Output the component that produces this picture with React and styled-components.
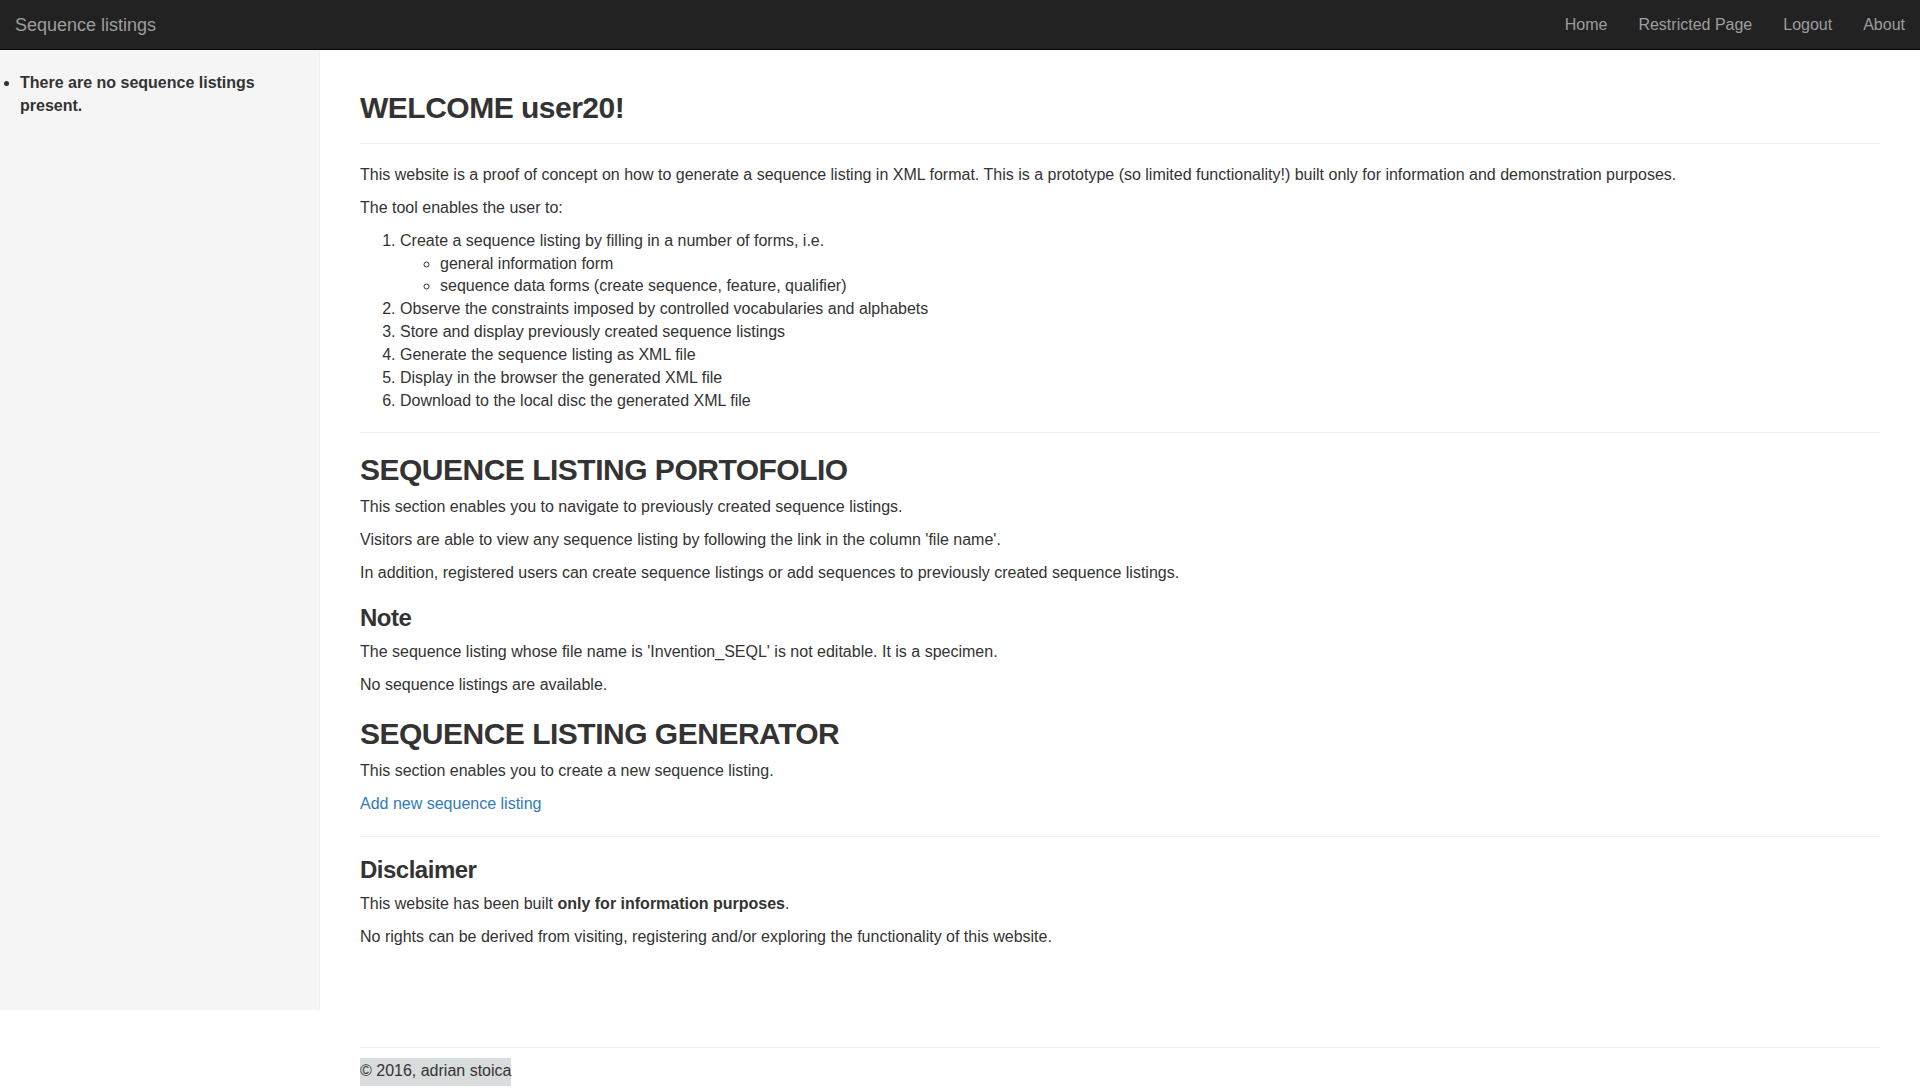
import React from 'react';
import styled, { createGlobalStyle } from 'styled-components';

const GlobalStyle = createGlobalStyle`
  * { box-sizing: border-box; }
  html, body { margin: 0; padding: 0; background: #fff; }
  body {
    font-family: "Liberation Sans", Helvetica, Arial, sans-serif;
    font-size: 16px;
    line-height: 1.42857143;
    color: #333;
  }
`;

const Navbar = styled.nav`
  display: flex;
  align-items: center;
  justify-content: space-between;
  height: 50px;
  padding-left: 15px;
  background: #222;
  border-bottom: 1px solid #080808;
`;

const Brand = styled.a`
  font-size: 18px;
  line-height: 20px;
  color: #9d9d9d;
  text-decoration: none;
`;

const NavList = styled.ul`
  display: flex;
  margin: 0;
  padding: 0;
  list-style: none;
`;

const NavLink = styled.a`
  display: block;
  padding: 15px 15px 15px 16px;
  font-size: 16px;
  line-height: 20px;
  color: #9d9d9d;
  text-decoration: none;
`;

const Row = styled.div`
  display: flex;
  align-items: stretch;
`;

const Sidebar = styled.aside`
  flex: 0 0 320px;
  width: 320px;
  padding: 22px 20px 20px 0;
  background: #f5f5f5;
  border-right: 1px solid #eee;
`;

const SideList = styled.ul`
  margin: 0;
  padding-left: 20px;
  font-weight: bold;
`;

const Main = styled.main`
  flex: 1;
  min-width: 0;
  padding: 0 40px 51px;
`;

const PageHeader = styled.div`
  margin: 41px 0 20px;
  padding-bottom: 9px;
  border-bottom: 1px solid #eee;
`;

const H1 = styled.h1`
  margin: 0 0 10px;
  font-size: 30px;
  font-weight: bold;
  letter-spacing: -0.5px;
  line-height: 1.1;
`;

const H2 = styled.h2`
  margin: 20px 0 10px;
  font-size: 30px;
  font-weight: bold;
  letter-spacing: -0.5px;
  line-height: 1.1;
`;

const H3 = styled.h3`
  margin: 20px 0 10px;
  font-size: 24px;
  font-weight: bold;
  letter-spacing: -0.5px;
  line-height: 1.1;
`;

const P = styled.p`
  margin: 0 0 10px;
`;

const OList = styled.ol`
  margin: 0 0 10px;
  padding-left: 40px;
`;

const SubList = styled.ul`
  margin: 0;
  padding-left: 40px;
  list-style-type: circle;
`;

const Rule = styled.hr`
  margin: ${p => p.$top || 20}px 0 ${p => p.$bottom || 20}px;
  border: 0;
  border-top: 1px solid #eee;
`;

const Link = styled.a`
  color: #337ab7;
  text-decoration: none;
`;

const Footer = styled.footer`
  margin-left: 320px;
  padding: 0 40px;
`;

const Copyright = styled.span`
  display: inline-block;
  height: 28px;
  line-height: 26px;
  background: #d9dcdd;
`;

export default function App() {
  return (
    <>
      <GlobalStyle />
      <Navbar>
        <Brand href="#">Sequence listings</Brand>
        <NavList>
          <li><NavLink href="#">Home</NavLink></li>
          <li><NavLink href="#">Restricted Page</NavLink></li>
          <li><NavLink href="#">Logout</NavLink></li>
          <li><NavLink href="#">About</NavLink></li>
        </NavList>
      </Navbar>
      <Row>
        <Sidebar>
          <SideList>
            <li>There are no sequence listings present.</li>
          </SideList>
        </Sidebar>
        <Main>
          <PageHeader>
            <H1>WELCOME user20!</H1>
          </PageHeader>
          <P>
            This website is a proof of concept on how to generate a sequence listing in XML format. This is a prototype (so limited functionality!) built only for information and demonstration purposes.
          </P>
          <P>The tool enables the user to:</P>
          <OList>
            <li>
              Create a sequence listing by filling in a number of forms, i.e.
              <SubList>
                <li>general information form</li>
                <li>sequence data forms (create sequence, feature, qualifier)</li>
              </SubList>
            </li>
            <li>Observe the constraints imposed by controlled vocabularies and alphabets</li>
            <li>Store and display previously created sequence listings</li>
            <li>Generate the sequence listing as XML file</li>
            <li>Display in the browser the generated XML file</li>
            <li>Download to the local disc the generated XML file</li>
          </OList>
          <Rule />
          <H2>SEQUENCE LISTING PORTOFOLIO</H2>
          <P>This section enables you to navigate to previously created sequence listings.</P>
          <P>Visitors are able to view any sequence listing by following the link in the column 'file name'.</P>
          <P>In addition, registered users can create sequence listings or add sequences to previously created sequence listings.</P>
          <H3>Note</H3>
          <P>The sequence listing whose file name is 'Invention_SEQL' is not editable. It is a specimen.</P>
          <P>No sequence listings are available.</P>
          <H2>SEQUENCE LISTING GENERATOR</H2>
          <P>This section enables you to create a new sequence listing.</P>
          <P><Link href="#">Add new sequence listing</Link></P>
          <Rule />
          <H3>Disclaimer</H3>
          <P>This website has been built <strong>only for information purposes</strong>.</P>
          <P>No rights can be derived from visiting, registering and/or exploring the functionality of this website.</P>
        </Main>
      </Row>
      <Footer>
        <Rule $top={37} $bottom={10} />
        <Copyright>© 2016, adrian stoica</Copyright>
      </Footer>
    </>
  );
}
